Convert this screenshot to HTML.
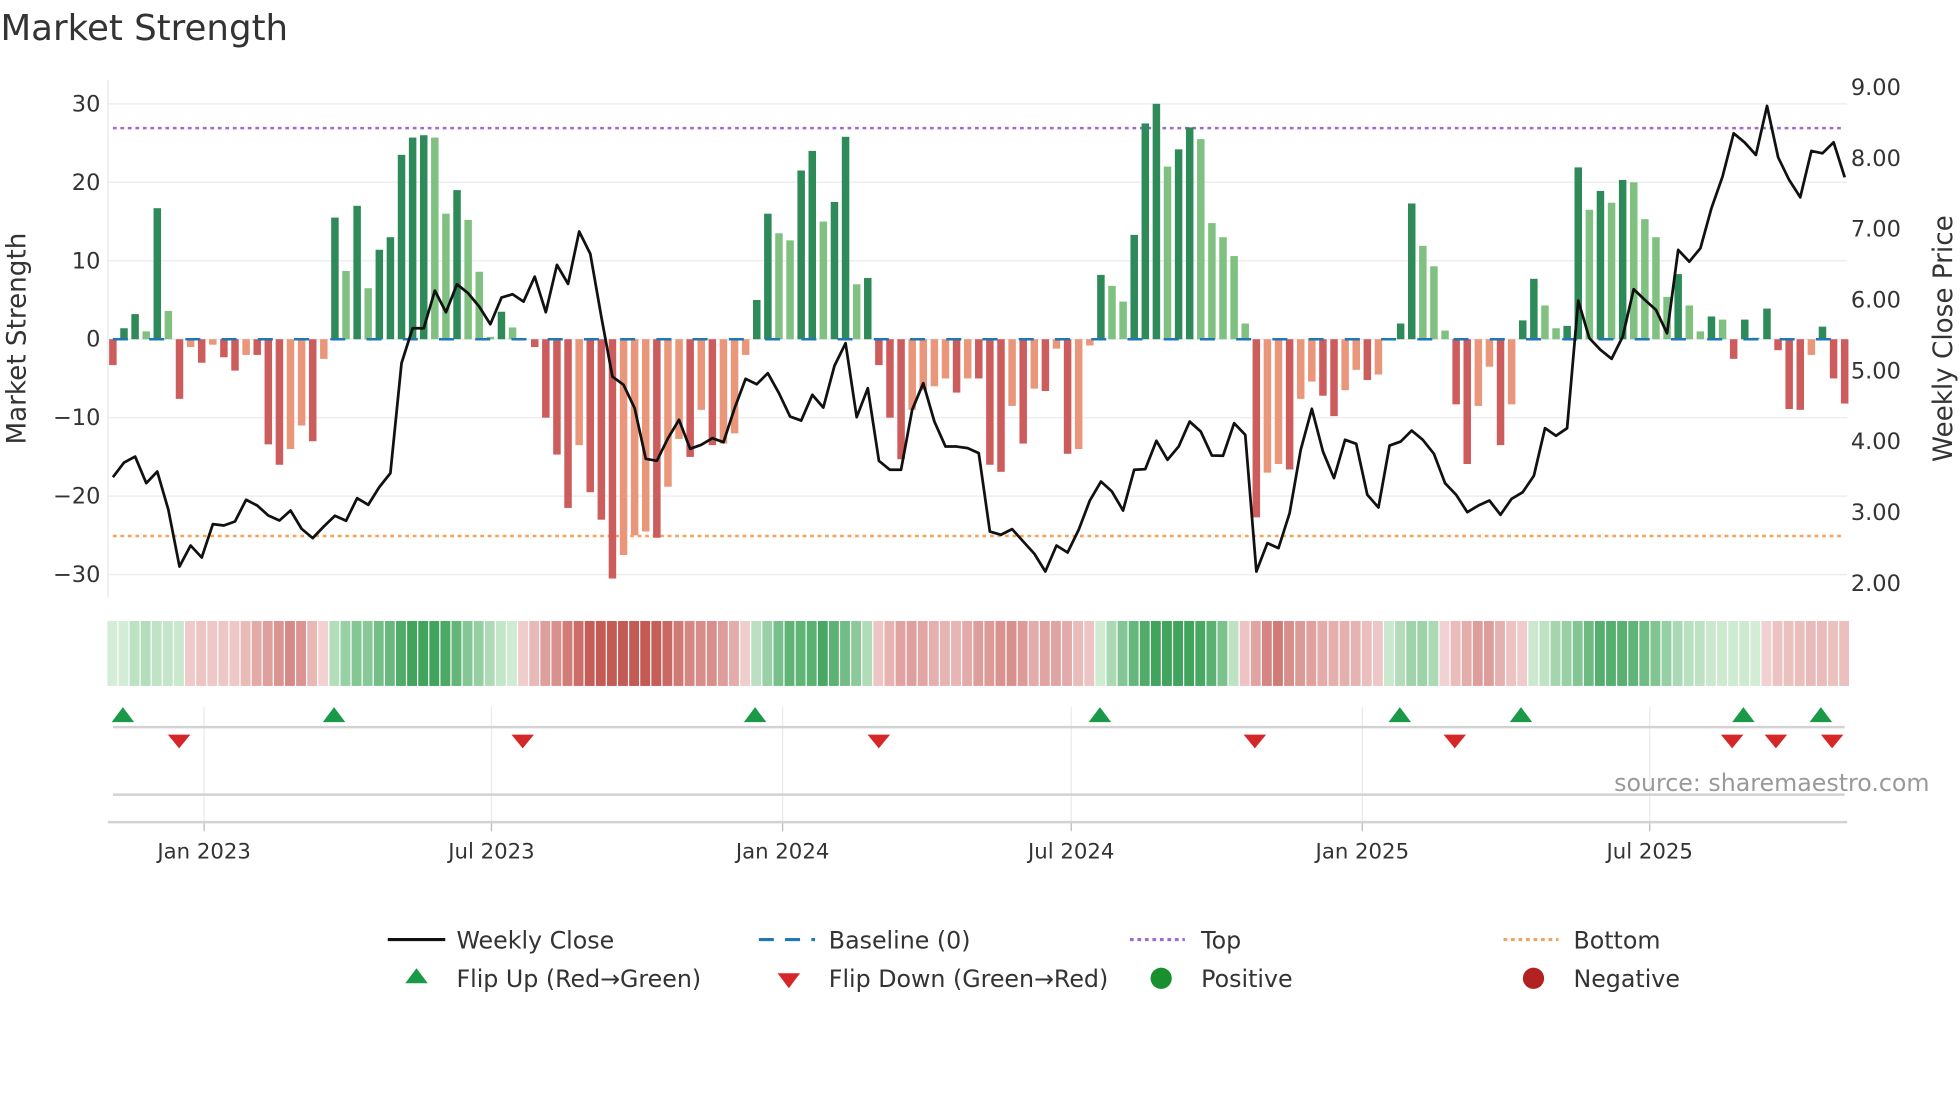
<!DOCTYPE html>
<html><head><meta charset="utf-8"><style>
html,body{margin:0;padding:0;background:#fff;}
svg{display:block;}
text{font-family:"DejaVu Sans","Liberation Sans",sans-serif;}
</style></head><body>
<svg id="c" width="1960" height="1102" viewBox="0 0 1568 882" xmlns="http://www.w3.org/2000/svg"></svg>
<script>
var V=[-3.3,1.4,3.2,1,16.7,3.6,-7.6,-1,-3,-0.7,-2.3,-4,-2,-2,-13.4,-16,-14,-11,-13,-2.5,15.5,8.7,17,6.5,11.4,13,23.5,25.7,26,25.7,16,19,15.2,8.6,0.3,3.5,1.5,0,-1,-10,-14.7,-21.5,-13.5,-19.5,-23,-30.5,-27.5,-25,-24.5,-25.3,-18.8,-12.7,-15,-9,-13.5,-13.3,-12,-2,5,16,13.5,12.6,21.5,24,15,17.5,25.8,7,7.8,-3.3,-10,-15.3,-9,-6.5,-6,-5,-6.8,-5,-5,-16,
-16.9,-8.5,-13.3,-6.3,-6.6,-1.2,-14.6,-14,-0.8,8.2,6.8,4.8,13.3,27.5,30,22,24.2,27,25.5,14.8,13,10.6,2,-22.7,-17,-15.9,-16.6,-7.6,-5.4,-7.2,-9.8,-6.5,-3.9,-5.2,-4.5,0,2,17.3,11.9,9.3,1.1,-8.3,-15.9,-8.5,-3.5,-13.5,-8.3,2.4,7.7,4.3,1.4,1.7,21.9,16.5,18.9,17.4,20.3,20,15.3,13,5.4,8.3,4.3,1,2.9,2.5,-2.5,2.5,0.2,3.9,-1.4,-8.9,-9,-2,1.6,-5,-8.2];
var P=[1192,1148,1130,1210,1175,1290,1460,1397,1433,1333,1337,1325,1260,1277,1307,1322,1292,1347,1375,1340,1308,1323,1255,1275,1222,1180,850,745,745,632,697,613,640,680,733,653,643,665,590,697,555,612,455,522,710,890,915,985,1137,1143,1075,1020,1107,1095,1075,1087,985,897,913,880,940,1010,1022,945,983,858,790,1012,925,1143,1170,1170,990,910,1025,1100,1100,1105,1120,1355,
1365,1348,1385,1422,1475,1397,1418,1350,1262,1205,1235,1292,1170,1168,1083,1140,1100,1025,1055,1127,1128,1030,1065,1475,1390,1405,1300,1110,987,1115,1195,1080,1092,1245,1283,1097,1085,1052,1080,1122,1210,1245,1297,1277,1262,1305,1257,1237,1188,1045,1068,1045,662,775,810,837,770,628,660,690,760,510,545,505,385,290,160,188,225,78,232,300,352,213,220,187,292];
var s='';
function X(i){return 90+i*8.885;}
function Y(v){return 271.5-v*6.28;}
s+='<text x="0" y="32" font-size="28.5" fill="#333">Market Strength</text>';
for(var g=-30;g<=30;g+=10){s+='<line x1="86" x2="1478" y1="'+Y(g)+'" y2="'+Y(g)+'" stroke="#eceef3" stroke-width="1.2"/>';
s+='<text x="80" y="'+(Y(g)+6)+'" font-size="18" fill="#333" text-anchor="end">'+(g<0?'\u2212'+(-g):g)+'</text>';}
var pl=['9.00','8.00','7.00','6.00','5.00','4.00','3.00','2.00'];
for(var k=0;k<8;k++){s+='<text x="1481" y="'+(70+k*56.7+6)+'" font-size="18" fill="#333">'+pl[k]+'</text>';}
s+='<line x1="86" x2="86" y1="64" y2="478" stroke="#e6e8ee"/>';
s+='<text transform="translate(20,271) rotate(-90)" font-size="21" fill="#333" text-anchor="middle">Market Strength</text>';
s+='<text transform="translate(1562,271) rotate(-90)" font-size="21" fill="#333" text-anchor="middle">Weekly Close Price</text>';
s+='<line x1="90" x2="1476" y1="102.5" y2="102.5" stroke="#9b6bd6" stroke-width="2" stroke-dasharray="3,3"/>';
s+='<line x1="90" x2="1476" y1="429" y2="429" stroke="#f2a35e" stroke-width="2" stroke-dasharray="3,3"/>';
for(var i=0;i<V.length;i++){var v=V[i],p=i?V[i-1]:0;var dark=Math.abs(v)>=Math.abs(p)||(v*p<=0);
var c=v>=0?(dark?'#2e8a58':'#80c181'):(dark?'#cd5c5c':'#e9967a');
var y1=Y(Math.max(v,0)),y2=Y(Math.min(v,0));if(Math.abs(v)<0.05)continue;
s+='<rect x="'+(X(i)-3)+'" y="'+y1+'" width="6" height="'+(y2-y1)+'" fill="'+c+'"/>';}
s+='<line x1="90" x2="1476" y1="271.5" y2="271.5" stroke="#1f77b4" stroke-width="2" stroke-dasharray="12,17"/>';
var d='';for(var i=0;i<P.length;i++){d+=(i?'L':'M')+X(i).toFixed(1)+' '+(64+P[i]*0.2667).toFixed(1);}
s+='<path d="'+d+'" fill="none" stroke="#111" stroke-width="2.2" stroke-linejoin="round"/>';
function mix(a,b,t){var r='#';for(var j=0;j<3;j++){var x=Math.round(a[j]+(b[j]-a[j])*t);r+=('0'+x.toString(16)).slice(-2);}return r;}
for(var i=0;i<V.length;i++){var a=0,n=0;for(var j=i-2;j<=i+2;j++){if(j>=0&&j<V.length){a+=V[j];n++;}}a/=n;
var t=Math.min(Math.abs(a)/22,1);var c=a>=0?mix([214,238,216],[64,164,92],t):mix([242,212,212],[196,90,84],t);
s+='<rect x="'+(X(i)-4.4)+'" y="497" width="7.9" height="52" fill="'+c+'"/>';}
var vx=[163,393,626,857,1090,1320],vl=['Jan 2023','Jul 2023','Jan 2024','Jul 2024','Jan 2025','Jul 2025'];
for(var k=0;k<6;k++){s+='<line x1="'+vx[k]+'" x2="'+vx[k]+'" y1="566" y2="666" stroke="#e8eaf0"/>';
s+='<line x1="'+vx[k]+'" x2="'+vx[k]+'" y1="658" y2="665" stroke="#bbb"/>';
s+='<text x="'+vx[k]+'" y="687" font-size="17" fill="#333" text-anchor="middle">'+vl[k]+'</text>';}
s+='<line x1="90" x2="1476" y1="582" y2="582" stroke="#d2d2d2" stroke-width="2"/>';
s+='<line x1="90" x2="1476" y1="636" y2="636" stroke="#d2d2d2" stroke-width="2"/>';
s+='<line x1="86" x2="1478" y1="658" y2="658" stroke="#d2d2d2" stroke-width="2"/>';
[98,267,604,880,1120,1217,1395,1457].forEach(function(x){s+='<path d="M'+(x-9)+' 578 L'+(x+9)+' 578 L'+x+' 566 Z" fill="#1a9a48"/>';});
[143,418,703,1004,1164,1386,1421,1466].forEach(function(x){s+='<path d="M'+(x-9)+' 588 L'+(x+9)+' 588 L'+x+' 599 Z" fill="#d62728"/>';});
s+='<text x="1544" y="633" font-size="19" fill="#999" text-anchor="end">source: sharemaestro.com</text>';
s+='<line x1="310" x2="356" y1="752" y2="752" stroke="#111" stroke-width="2.5"/><text x="365" y="759" font-size="19" fill="#333">Weekly Close</text>';
s+='<line x1="607" x2="652" y1="752" y2="752" stroke="#1f77b4" stroke-width="2.5" stroke-dasharray="12,9"/><text x="663" y="759" font-size="19" fill="#333">Baseline (0)</text>';
s+='<line x1="904" x2="948" y1="752" y2="752" stroke="#9b6bd6" stroke-width="2.5" stroke-dasharray="3,3"/><text x="961" y="759" font-size="19" fill="#333">Top</text>';
s+='<line x1="1203" x2="1247" y1="752" y2="752" stroke="#f2a35e" stroke-width="2.5" stroke-dasharray="3,3"/><text x="1259" y="759" font-size="19" fill="#333">Bottom</text>';
s+='<path d="M324 787 L342 787 L333 775 Z" fill="#1a9a48"/><text x="365" y="790" font-size="19" fill="#333">Flip Up (Red\u2192Green)</text>';
s+='<path d="M622 779 L640 779 L631 791 Z" fill="#d62728"/><text x="663" y="790" font-size="19" fill="#333">Flip Down (Green\u2192Red)</text>';
s+='<circle cx="929" cy="783" r="8.5" fill="#1a8f2e"/><text x="961" y="790" font-size="19" fill="#333">Positive</text>';
s+='<circle cx="1227" cy="783" r="8.5" fill="#b22222"/><text x="1259" y="790" font-size="19" fill="#333">Negative</text>';
document.getElementById('c').innerHTML=s;
</script>
</body></html>
